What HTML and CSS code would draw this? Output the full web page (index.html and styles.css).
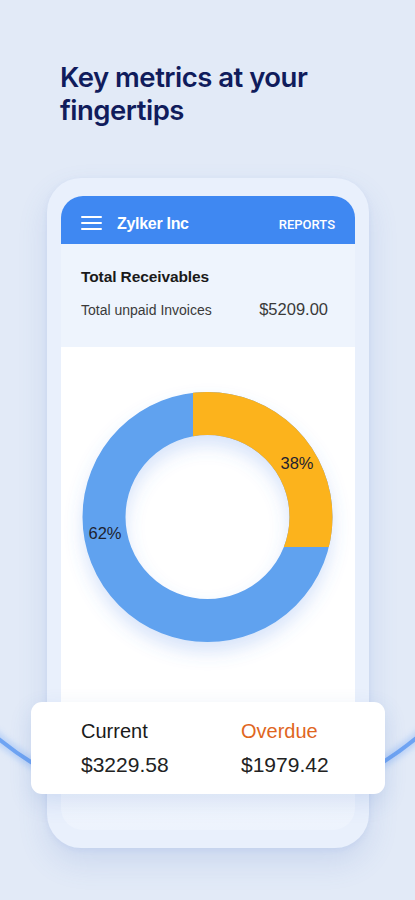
FILE: index.html
```html
<!DOCTYPE html>
<html lang="en">
<head>
<meta charset="utf-8">
<title>Key metrics at your fingertips</title>
<link rel="stylesheet" href="styles.css">
</head>
<body>
<svg class="bg-arc" width="415" height="900" viewBox="0 0 415 900" aria-hidden="true">
  <defs>
    <filter id="glow" x="-20%" y="-50%" width="140%" height="200%">
      <feGaussianBlur stdDeviation="3"/>
    </filter>
  </defs>
  <path d="M -20 722.5 A 330 330 0 0 0 434 722.5" fill="none" stroke="#9cc0f7" stroke-width="10" filter="url(#glow)" opacity="0.6"/>
  <path d="M -20 722.5 A 330 330 0 0 0 434 722.5" fill="none" stroke="#6fa4f3" stroke-width="4"/>
</svg>
<main class="page">
  <h1 class="title">Key metrics at your<br>fingertips</h1>
  <div class="phone">
    <div class="screen">
      <header class="appbar">
        <span class="menu" aria-hidden="true"><i></i><i></i><i></i></span>
        <span class="org">Zylker Inc</span>
        <span class="reports">REPORTS</span>
      </header>
      <section class="summary">
        <h2 class="summary-title">Total Receivables</h2>
        <div class="summary-row">
          <span class="summary-label">Total unpaid Invoices</span>
          <span class="summary-value">$5209.00</span>
        </div>
      </section>
      <section class="chart">
        <svg class="donut" width="294" height="340" viewBox="0 0 294 340">
          <defs>
            <clipPath id="orangeClip"><rect x="132" y="0" width="200" height="200"/></clipPath>
            <filter id="ds" x="-30%" y="-30%" width="160%" height="170%">
              <feDropShadow dx="0" dy="10" stdDeviation="9" flood-color="#4a86e8" flood-opacity="0.22"/>
            </filter>
          </defs>
          <g filter="url(#ds)">
            <circle cx="146.5" cy="170" r="103.5" fill="none" stroke="#60a2ef" stroke-width="43"/>
            <circle cx="146.5" cy="170" r="103.5" fill="none" stroke="#fcb31e" stroke-width="43" clip-path="url(#orangeClip)"/>
          </g>
          <text class="pct" x="236" y="122" text-anchor="middle">38%</text>
          <text class="pct" x="44" y="192" text-anchor="middle">62%</text>
        </svg>
      </section>
    </div>
    <div class="totals">
      <div class="total">
        <span class="total-label">Current</span>
        <span class="total-value">$3229.58</span>
      </div>
      <div class="total">
        <span class="total-label overdue">Overdue</span>
        <span class="total-value">$1979.42</span>
      </div>
    </div>
  </div>
</main>
</body>
</html>
```
FILE: styles.css
```css
html, body {
  margin: 0;
  padding: 0;
}
body {
  width: 415px;
  height: 900px;
  overflow: hidden;
  background: #e2eaf7;
  font-family: "Liberation Sans", Arial, sans-serif;
  position: relative;
}
.bg-arc {
  position: absolute;
  left: 0;
  top: 0;
  z-index: 0;
}
.page {
  position: relative;
  z-index: 1;
  display: flex;
  flex-direction: column;
}
.title {
  margin: 61px 0 0 60px;
  font-family: Inter, "Noto Sans", sans-serif;
  font-weight: 600;
  font-size: 27.5px;
  line-height: 33px;
  letter-spacing: -0.5px;
  color: #101c5c;
}
.phone {
  position: relative;
  margin: 51px 0 0 47px;
  width: 322px;
  height: 670px;
  box-sizing: border-box;
  padding: 18px 14px;
  border-radius: 34px;
  background: #e9f0fc;
  box-shadow: 0 14px 30px rgba(80, 120, 200, 0.16), 0 2px 6px rgba(80, 120, 200, 0.08);
  display: flex;
}
.screen {
  flex: 1;
  border-radius: 22px;
  overflow: hidden;
  background: linear-gradient(#ffffff 0%, #ffffff 82%, #edf3fd 100%);
  display: flex;
  flex-direction: column;
}
.appbar {
  height: 48px;
  box-sizing: border-box;
  flex: none;
  background: #3f88f2;
  display: flex;
  align-items: center;
  padding: 5px 20px 0;
  color: #fff;
}
.menu {
  width: 21px;
  height: 14px;
  display: flex;
  flex-direction: column;
  justify-content: space-between;
  margin-right: 15px;
  margin-top: 1px;
}
.menu i {
  display: block;
  height: 2.2px;
  background: #fff;
  border-radius: 1px;
}
.org {
  font-weight: 700;
  font-size: 16px;
  letter-spacing: -0.3px;
  flex: 1;
  margin-top: 2px;
}
.reports {
  font-family: Roboto, "Liberation Sans", sans-serif;
  font-weight: 500;
  font-size: 13px;
  letter-spacing: 0;
  margin-top: 3px;
}
.summary {
  height: 103px;
  flex: none;
  background: #eef4fd;
  box-sizing: border-box;
  padding: 24px 27px 0 20px;
}
.summary-title {
  margin: 0;
  font-size: 15.5px;
  line-height: 18px;
  font-weight: 700;
  color: #1a1a1a;
  letter-spacing: -0.1px;
}
.summary-row {
  display: flex;
  justify-content: space-between;
  align-items: baseline;
  margin-top: 14px;
}
.summary-label {
  font-size: 14px;
  color: #3a3a3a;
}
.summary-value {
  font-size: 16.5px;
  color: #3a3a3a;
}
.chart {
  flex: 1;
  background: transparent;
}
.donut {
  display: block;
}
.pct {
  font-family: "Liberation Sans", Arial, sans-serif;
  font-size: 16.5px;
  fill: #1e2230;
}
.totals {
  position: absolute;
  left: -16px;
  top: 524px;
  width: 354px;
  height: 92px;
  box-sizing: border-box;
  background: #ffffff;
  border-radius: 11px;
  box-shadow: 0 8px 22px rgba(70, 110, 190, 0.16);
  padding: 17px 0 0 50px;
  display: grid;
  grid-template-columns: 160px auto;
}
.total {
  display: flex;
  flex-direction: column;
  gap: 10px;
}
.total-label {
  font-size: 20px;
  line-height: 24px;
  color: #1a1a1a;
}
.total-label.overdue {
  color: #e0661e;
}
.total-value {
  font-size: 21px;
  line-height: 24px;
  color: #222;
}
```
